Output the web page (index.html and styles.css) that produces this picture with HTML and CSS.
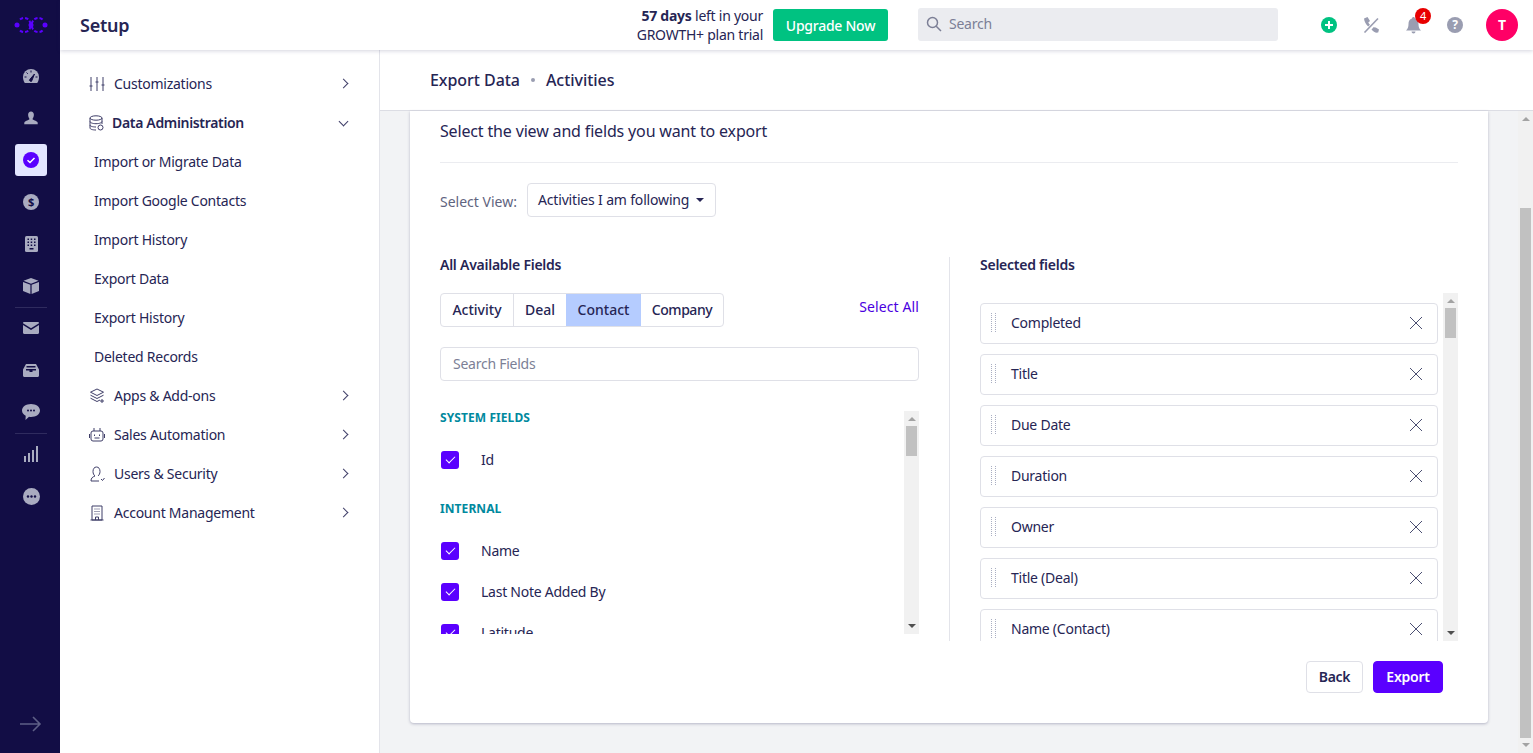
FILE: index.html
```html
<!DOCTYPE html>
<html>
<head>
<meta charset="UTF-8">
<title>Export Data</title>
<link rel="stylesheet" href="styles.css">
</head>
<body>

<nav class="rail">
	<div class="rail-logo">
		<svg width="34" height="18" viewBox="0 0 34 18" fill="none" stroke="#5a00ff" stroke-width="2">
			<path stroke-dasharray="3.500 2" d="M6 3.500C8 1.500 12 1 15 4C16 5 18 13 20 14.500C23 17 27 16.500 29 14"/>
			<path stroke-dasharray="3.500 2" d="M6 14.500C8 16.500 12 17 15 14C16 13 18 5 20 3.500C23 1 27 1.500 29 4"/>
			<circle cx="3" cy="9" r="2.500" fill="#5a00ff" stroke="none"/>
			<circle cx="17" cy="9" r="2.500" fill="#5a00ff" stroke="none"/>
			<circle cx="31" cy="9" r="2.500" fill="#5a00ff" stroke="none"/>
		</svg>
	</div>
	<a class="rail-item"><svg width="16" height="14" viewBox="0 0 16 14"><path d="M8 0a8 8 0 0 0-8 8c0 2.300.7 4.300 1.800 6h12.400C15.300 12.300 16 10.300 16 8a8 8 0 0 0-8-8z" fill="#a9abc0"/><path d="M7 10.200L11.500 5 9 11.200a1.200 1.200 0 1 1-2-1zM8 1.500v2M3.500 3.500l1.300 1.300M1.500 8h2M12.500 8h2" stroke="#120d45" stroke-width="1" fill="#120d45"/></svg></a>
	<a class="rail-item"><svg width="14" height="14" viewBox="0 0 16 15"><path d="M8 0c2 0 3.300 1.600 3.300 3.800S10 8 9.800 8.600c0 1.200 4.700 2 5.600 3.600.3.700.3 1.800.3 2.500H.3c0-.7 0-1.800.3-2.500C1.500 10.600 6.200 9.800 6.200 8.600 6 8 4.700 6 4.700 3.800S6 0 8 0z" fill="#a9abc0"/></svg></a>
	<a class="rail-item rail-active"><svg width="16" height="16" viewBox="0 0 16 16"><circle cx="8" cy="8" r="8" fill="#5a00ff"/><path d="M4.500 8.200l2.500 2.300 4.500-4.500" fill="none" stroke="#fff" stroke-width="1.500"/></svg></a>
	<a class="rail-item"><span class="coin">$</span></a>
	<a class="rail-item"><svg width="13" height="16" viewBox="0 0 13 16"><rect width="13" height="16" rx="1.500" fill="#a9abc0"/><g fill="#120d45"><rect x="2.500" y="2.500" width="1.500" height="1.500"/><rect x="5.700" y="2.500" width="1.500" height="1.500"/><rect x="9" y="2.500" width="1.500" height="1.500"/><rect x="2.500" y="5.500" width="1.500" height="1.500"/><rect x="5.700" y="5.500" width="1.500" height="1.500"/><rect x="9" y="5.500" width="1.500" height="1.500"/><rect x="2.500" y="8.500" width="1.500" height="1.500"/><rect x="5.700" y="8.500" width="1.500" height="1.500"/><rect x="9" y="8.500" width="1.500" height="1.500"/><rect x="4.500" y="12" width="4" height="1.500"/></g></svg></a>
	<a class="rail-item"><svg width="16" height="16" viewBox="0 0 16 16" fill="#a9abc0"><path d="M8 0l7.500 2.800L8 5.700.5 2.800z"/><path d="M0 4l7.400 2.800V16L0 13z"/><path d="M16 4L8.600 6.800V16L16 13z"/></svg></a>
	<div class="rail-sep"></div>
	<a class="rail-item"><svg width="16" height="12" viewBox="0 0 16 12" fill="#a9abc0"><path d="M0 1.200C0 .5.500 0 1.200 0h13.600c.7 0 1.200.5 1.200 1.200L8 6.200z"/><path d="M0 3l8 5 8-5v7.800c0 .7-.5 1.200-1.200 1.200H1.200C.5 12 0 11.500 0 10.800z"/></svg></a>
	<a class="rail-item"><svg width="16" height="13" viewBox="0 0 16 13" fill="#a9abc0"><path fill-rule="evenodd" d="M3 0h10l3 5.500V11.500c0 .8-.6 1.500-1.500 1.500h-13C.6 13 0 12.300 0 11.500V5.500zM3.500 2v1.500h9V2zM3 5v1.500h3.500V8h3V6.500H13V5z"/></svg></a>
	<a class="rail-item"><svg width="18" height="16" viewBox="0 0 18 16"><path d="M9 0c5 0 9 2.800 9 6.500S14 13 9 13c-.7 0-1.300 0-2-.2L3.500 16l.2-4.200C1.500 10.700 0 8.800 0 6.500 0 2.800 4 0 9 0z" fill="#a9abc0"/><g fill="#120d45"><circle cx="6" cy="6.500" r="1"/><circle cx="9" cy="6.500" r="1"/><circle cx="12" cy="6.500" r="1"/></g></svg></a>
	<div class="rail-sep"></div>
	<a class="rail-item"><svg width="15" height="16" viewBox="0 0 15 16" fill="#a9abc0"><rect y="10" width="2" height="6"/><rect x="4" y="7" width="2" height="9"/><rect x="8" y="4" width="2" height="12"/><rect x="12" y="0" width="2" height="16"/></svg></a>
	<a class="rail-item"><svg width="17" height="17" viewBox="0 0 17 17"><circle cx="8.500" cy="8.500" r="8.500" fill="#a9abc0"/><g fill="#120d45"><circle cx="5" cy="8.500" r="1.200"/><circle cx="8.500" cy="8.500" r="1.200"/><circle cx="12" cy="8.500" r="1.200"/></g></svg></a>
	<a class="rail-expand"><svg width="22" height="16" viewBox="0 0 22 16" fill="none" stroke="#5e5f86" stroke-width="1.600"><path d="M0 8h20M13 1l7 7-7 7"/></svg></a>
</nav>

<div class="shell">
	<header class="topbar">
		<div class="app-title">Setup</div>
		<div class="trial"><b>57 days</b> left in your<br>GROWTH+ plan trial</div>
		<a class="upgrade">Upgrade Now</a>
		<div class="search">
			<svg width="16" height="16" viewBox="0 0 16 16" fill="none" stroke="#7c7f96" stroke-width="1.500"><circle cx="6.500" cy="6.500" r="5"/><path d="M10.200 10.200L15 15"/></svg>
			<span>Search</span>
		</div>
		<a class="top-icon"><svg width="16" height="16" viewBox="0 0 16 16"><circle cx="8" cy="8" r="8" fill="#00c281"/><path d="M8 4v8M4 8h8" stroke="#fff" stroke-width="2"/></svg></a>
		<a class="top-icon"><svg width="17" height="16" viewBox="0 0 17 16"><path d="M1 1.500L4.500 0l2.500 4-1.700 1.500c.4.900 1 1.600 1.700 2.200L5.200 9.500C2.800 7.400 1.300 4.600 1 1.500zM8.500 12.500l2.300-2.600c.7.500 1.300.6 2 .6L16 12.500l-.8 3c-2.500.6-4.800-.5-6.700-3z" fill="#9a9db1"/><path d="M1.500 15.500L15 1.500" stroke="#9a9db1" stroke-width="1.600"/></svg></a>
		<a class="top-icon bell">
			<svg width="15" height="17" viewBox="0 0 15 17" fill="#9a9db1"><path d="M7.500 0C8.300 0 9 .6 9 1.500 11.500 2.200 12.500 4.300 12.500 7c0 3 .7 4.700 2.500 6.500H0C1.800 11.700 2.500 10 2.500 7 2.500 4.300 3.500 2.200 6 1.500 6 .6 6.700 0 7.500 0z"/><path d="M5.500 14.500h4a2 2 0 0 1-4 0z"/></svg>
			<span class="badge">4</span>
		</a>
		<a class="top-icon"><span class="help">?</span></a>
		<div class="avatar">T</div>
	</header>

	<div class="workspace">
		<aside class="settings">
			<a class="set-row">
				<svg class="set-icon" width="16" height="16" viewBox="0 0 16 16"><path d="M2 1v14M8 1v14M14 1v14M.5 10h3M6.500 6h3M12.500 9h3"/></svg>
				<span>Customizations</span><i class="chev"></i>
			</a>
			<a class="set-row set-open">
				<svg class="set-icon" width="15" height="16" viewBox="0 0 15 16"><ellipse cx="7" cy="3" rx="6" ry="2.200"/><path d="M1 3v10c0 1.200 2.500 2 6 2M13 3v6M1 6.500c0 1.200 2.700 2.200 6 2.200s6-1 6-2.200M1 10c0 1.200 2.500 2 6 2"/><circle cx="11.500" cy="12.500" r="2.500"/></svg>
				<span>Data Administration</span><i class="chev chev-down"></i>
			</a>
			<a class="set-sub">Import or Migrate Data</a>
			<a class="set-sub">Import Google Contacts</a>
			<a class="set-sub">Import History</a>
			<a class="set-sub">Export Data</a>
			<a class="set-sub">Export History</a>
			<a class="set-sub">Deleted Records</a>
			<a class="set-row">
				<svg class="set-icon" width="16" height="16" viewBox="0 0 16 16"><path d="M8 1l6.500 3.200L8 7.500 1.500 4.200zM1.500 7.200L8 10.500l6.500-3.300M1.500 10.200L8 13.500l3-1.500M13 11v4M11 13h4"/></svg>
				<span>Apps &amp; Add-ons</span><i class="chev"></i>
			</a>
			<a class="set-row">
				<svg class="set-icon" width="16" height="16" viewBox="0 0 16 16"><rect x="2" y="4" width="12" height="10" rx="2"/><path d="M5 1v3M11 1v3M0.500 7v4M15.500 7v4M5.500 11h5M5.500 7.500v1.500M10.500 7.500v1.500"/></svg>
				<span>Sales Automation</span><i class="chev"></i>
			</a>
			<a class="set-row">
				<svg class="set-icon" width="16" height="16" viewBox="0 0 16 16"><path d="M10 15H2c0-3 1.500-4 4-5C4.800 9 4 7.500 4 5.500 4 2.800 5.300 1 7.500 1s3.500 1.800 3.500 4.500c0 2-.8 3.500-2 4.500M12 13l1.500 1.500L15.500 12"/></svg>
				<span>Users &amp; Security</span><i class="chev"></i>
			</a>
			<a class="set-row">
				<svg class="set-icon" width="16" height="16" viewBox="0 0 16 16"><path d="M3 15V1h10v14zM1.500 15h13M6.500 15v-3h3v3M5.500 4h1M7.500 4h1M9.500 4h1M5.500 6.500h1M7.500 6.500h1M9.500 6.500h1M5.500 9h1M7.500 9h1M9.500 9h1"/></svg>
				<span>Account Management</span><i class="chev"></i>
			</a>
		</aside>

		<main class="main">
			<div class="crumbs">
				<span>Export Data</span><i class="crumb-dot"></i><span>Activities</span>
			</div>
			<div class="pane">
				<div class="pane-body">
					<section class="card">
						<h2 class="card-title">Select the view and fields you want to export</h2>
						<div class="view-row">
							<label>Select View:</label>
							<a class="dropdown">Activities I am following<i class="caret"></i></a>
						</div>
						<div class="columns">
							<div class="col-left">
								<h3 class="col-head">All Available Fields</h3>
								<div class="tab-row">
									<div class="tabs">
										<a class="tab tab-line">Activity</a>
										<a class="tab">Deal</a>
										<a class="tab tab-on">Contact</a>
										<a class="tab">Company</a>
									</div>
									<a class="select-all">Select All</a>
								</div>
								<div class="field-search">Search Fields</div>
								<div class="scroll-box field-box">
									<div class="scroll-inner">
										<h4 class="group-head">SYSTEM FIELDS</h4>
										<div class="check-row"><i class="check"></i>Id</div>
										<h4 class="group-head group-next">INTERNAL</h4>
										<div class="check-row"><i class="check"></i>Name</div>
										<div class="check-row"><i class="check"></i>Last Note Added By</div>
										<div class="check-row"><i class="check"></i>Latitude</div>
									</div>
									<div class="fake-scroll"><i class="arrow-up"></i><b class="thumb"></b><i class="arrow-down"></i></div>
								</div>
							</div>
							<div class="col-right">
								<h3 class="col-head">Selected fields</h3>
								<div class="scroll-box picked-box">
									<div class="scroll-inner picked-list">
										<div class="picked"><i class="grip"></i>Completed<svg class="remove" width="12" height="12" viewBox="0 0 12 12"><path d="M0 0l12 12M12 0L0 12"/></svg></div>
										<div class="picked"><i class="grip"></i>Title<svg class="remove" width="12" height="12" viewBox="0 0 12 12"><path d="M0 0l12 12M12 0L0 12"/></svg></div>
										<div class="picked"><i class="grip"></i>Due Date<svg class="remove" width="12" height="12" viewBox="0 0 12 12"><path d="M0 0l12 12M12 0L0 12"/></svg></div>
										<div class="picked"><i class="grip"></i>Duration<svg class="remove" width="12" height="12" viewBox="0 0 12 12"><path d="M0 0l12 12M12 0L0 12"/></svg></div>
										<div class="picked"><i class="grip"></i>Owner<svg class="remove" width="12" height="12" viewBox="0 0 12 12"><path d="M0 0l12 12M12 0L0 12"/></svg></div>
										<div class="picked"><i class="grip"></i>Title (Deal)<svg class="remove" width="12" height="12" viewBox="0 0 12 12"><path d="M0 0l12 12M12 0L0 12"/></svg></div>
										<div class="picked"><i class="grip"></i>Name (Contact)<svg class="remove" width="12" height="12" viewBox="0 0 12 12"><path d="M0 0l12 12M12 0L0 12"/></svg></div>
									</div>
									<div class="fake-scroll"><i class="arrow-up"></i><b class="thumb"></b><i class="arrow-down"></i></div>
								</div>
							</div>
						</div>
						<div class="card-foot">
							<a class="btn btn-back">Back</a>
							<a class="btn btn-primary">Export</a>
						</div>
					</section>
				</div>
				<div class="fake-scroll page-scroll"><i class="arrow-up"></i><b class="thumb"></b><i class="arrow-down"></i></div>
			</div>
		</main>
	</div>
</div>

</body>
</html>
```

FILE: styles.css
```css
* {
	box-sizing: border-box;
}
html, body {
	height: 100%;
}
body {
	margin: 0;
	display: flex;
	overflow: hidden;
	background: #fff;
	color: #262554;
	font-family: "Noto Sans", sans-serif;
	font-size: 14px;
	letter-spacing: -0.25px;
}
h2, h3, h4 {
	margin: 0;
}

/* left rail */
.rail {
	width: 60px;
	flex: none;
	display: flex;
	flex-direction: column;
	align-items: center;
	padding-left: 2px;
	background: #120d45;
}
.rail-logo {
	height: 55px;
	padding-top: 16px;
}
.rail-logo svg {
	display: block;
}
.rail-item {
	width: 32px;
	height: 42px;
	display: flex;
	align-items: center;
	justify-content: center;
	flex: none;
}
.rail-active {
	position: relative;
}
.rail-active::before {
	content: "";
	position: absolute;
	left: 0;
	top: 5px;
	width: 32px;
	height: 32px;
	border-radius: 3px;
	background: #e3e6ff;
}
.rail-active svg {
	position: relative;
}
.rail-sep {
	width: 32px;
	height: 1px;
	margin-bottom: -1px;
	background: #2f2b5e;
	flex: none;
}
.coin {
	width: 16px;
	height: 16px;
	border-radius: 50%;
	background: #a9abc0;
	color: #120d45;
	font-size: 11px;
	font-weight: 700;
	line-height: 16px;
	text-align: center;
}
.rail-expand {
	margin-top: auto;
	margin-bottom: 21px;
	height: 16px;
}
.rail-expand svg {
	display: block;
}

.shell {
	flex: 1;
	min-width: 0;
	display: flex;
	flex-direction: column;
}

/* top bar */
.topbar {
	height: 50px;
	flex: none;
	display: flex;
	align-items: center;
	padding: 0 15px 0 20px;
	box-shadow: 0 1px 4px rgba(40, 40, 90, 0.2);
	position: relative;
	z-index: 2;
	background: #fff;
}
.app-title {
	flex: 1;
	font-size: 18px;
	font-weight: 600;
}
.trial {
	text-align: right;
	line-height: 19px;
}
.trial b {
	font-weight: 700;
}
.upgrade {
	width: 115px;
	height: 32px;
	margin-left: 10px;
	border-radius: 3px;
	background: #00c281;
	color: #fff;
	line-height: 33px;
	text-align: center;
	font-weight: 500;
}
.search {
	width: 360px;
	height: 33px;
	margin: 0 0 2px 30px;
	padding: 0 0 1px 8px;
	display: flex;
	align-items: center;
	gap: 7px;
	border-radius: 3px;
	background: #ebecf0;
	color: #7c7f96;
}
.top-icon {
	width: 42px;
	display: flex;
	justify-content: center;
	align-items: center;
	position: relative;
}
.search + .top-icon {
	margin-left: 30px;
}
.help {
	width: 16px;
	height: 16px;
	border-radius: 50%;
	background: #9a9db1;
	color: #fff;
	font-size: 12px;
	font-weight: 700;
	line-height: 16px;
	text-align: center;
}
.badge {
	position: absolute;
	left: 23px;
	top: -9px;
	width: 16px;
	height: 16px;
	border-radius: 50%;
	background: #e80000;
	color: #fff;
	font-size: 11px;
	line-height: 16px;
	text-align: center;
}
.avatar {
	width: 32px;
	height: 32px;
	margin-left: 10px;
	border-radius: 50%;
	background: #ff0066;
	color: #fff;
	font-weight: 700;
	line-height: 32px;
	text-align: center;
}

.workspace {
	flex: 1;
	min-height: 0;
	display: flex;
}

/* settings menu */
.settings {
	width: 320px;
	flex: none;
	padding-top: 14px;
	border-right: 1px solid #e3e4ea;
}
.set-row, .set-sub {
	height: 39px;
	display: flex;
	align-items: center;
}
.set-row {
	padding: 0 27px 0 29px;
}
.set-sub {
	padding-left: 34px;
}
.set-row span {
	flex: 1;
	margin-left: 9px;
}
.set-open span {
	margin-left: 8px;
	font-weight: 600;
	letter-spacing: -0.33px;
}
.set-icon {
	fill: none;
	stroke: #3f3e68;
	stroke-width: 1;
	flex: none;
}
.chev {
	width: 7px;
	height: 7px;
	margin-right: 5px;
	border-top: 1.500px solid #3f3e68;
	border-right: 1.500px solid #3f3e68;
	transform: rotate(45deg);
}
.chev-down {
	margin: -3px 5px 0 0;
	transform: rotate(135deg);
}

/* main */
.main {
	flex: 1;
	min-width: 0;
	display: flex;
	flex-direction: column;
}
.crumbs {
	height: 61px;
	flex: none;
	display: flex;
	align-items: center;
	padding: 0 0 1px 50px;
	border-bottom: 1px solid #dcdde4;
	font-size: 16px;
	font-weight: 500;
	letter-spacing: -0.05px;
}
.crumb-dot {
	width: 4px;
	height: 4px;
	margin: 0 11px;
	border-radius: 50%;
	background: #9a9db1;
}
.pane {
	flex: 1;
	min-height: 0;
	display: flex;
	background: #f2f3f5;
}
.pane-body {
	flex: 1;
	min-width: 0;
	padding: 0 30px;
}
.card {
	height: 612px;
	padding: 10px 30px 0;
	background: #fff;
	border-radius: 0 0 4px 4px;
	box-shadow: 0 1px 3px rgba(40, 40, 90, 0.3);
}
.card-title {
	height: 42px;
	padding-bottom: 21px;
	border-bottom: 1px solid #ebecf0;
	font-size: 16px;
	font-weight: 400;
	line-height: 20px;
	letter-spacing: -0.16px;
}
.view-row {
	margin-top: 20px;
	display: flex;
	align-items: center;
}
.view-row label {
	width: 87px;
	padding-top: 3px;
	color: #5f6480;
	letter-spacing: 0;
}
.dropdown {
	width: 189px;
	height: 34px;
	display: flex;
	align-items: center;
	padding: 0 0 2px 10px;
	border: 1px solid #dfe0e7;
	border-radius: 4px;
	letter-spacing: -0.17px;
}
.caret {
	margin: 2px 0 0 7px;
	border-top: 4px solid #262554;
	border-left: 4px solid transparent;
	border-right: 4px solid transparent;
}
.columns {
	margin-top: 40px;
	height: 384px;
	display: flex;
}
.col-left {
	width: 510px;
	padding-right: 30px;
	border-right: 1px solid #e3e4ea;
}
.col-right {
	flex: 1;
	margin-left: 30px;
}
.col-head {
	font-size: 14px;
	font-weight: 600;
	line-height: 16px;
	margin-bottom: 20px;
}
.tab-row {
	display: flex;
	justify-content: space-between;
	margin-bottom: 20px;
}
.tabs {
	display: grid;
	grid-template-columns: 73px 52px 75px 1fr;
	width: 284px;
	height: 34px;
	border: 1px solid #dfe0e7;
	border-radius: 4px;
	overflow: hidden;
}
.tab {
	padding-bottom: 2px;
	display: flex;
	align-items: center;
	justify-content: center;
	font-weight: 500;
	letter-spacing: 0;
}
.tab:last-child {
	letter-spacing: -0.45px;
}
.tab-line {
	border-right: 1px solid #dfe0e7;
}
.tab-on {
	background: #b5ccff;
}
.select-all {
	margin-top: 4px;
	line-height: 20px;
	color: #4a00e0;
	letter-spacing: 0.1px;
}
.field-search {
	height: 34px;
	padding-left: 12px;
	margin-bottom: 30px;
	border: 1px solid #dfe0e7;
	border-radius: 4px;
	color: #7c7f96;
	line-height: 32px;
}
.scroll-box {
	display: flex;
	overflow: hidden;
}
.field-box {
	height: 223px;
}
.picked-box {
	height: 348px;
}
.scroll-inner {
	flex: 1;
	min-width: 0;
}
.picked-list {
	padding-top: 10px;
	margin-right: 5px;
}
.group-head {
	font-size: 12px;
	font-weight: 700;
	line-height: 12px;
	padding-top: 1px;
	height: 13px;
	color: #00899e;
	margin-bottom: 16px;
	letter-spacing: 0.08px;
}
.group-next {
	margin-top: 22px;
}
.check-row {
	height: 40px;
	margin-bottom: 1px;
	padding: 0 0 2px 1px;
	display: flex;
	align-items: center;
}
.check {
	width: 18px;
	height: 18px;
	margin: 2px 22px 0 0;
	border-radius: 3px;
	background: #5a00ff;
	position: relative;
}
.check::after {
	content: "";
	position: absolute;
	left: 5px;
	top: 5px;
	width: 8px;
	height: 4px;
	border-left: 1.500px solid #fff;
	border-bottom: 1.500px solid #fff;
	transform: rotate(-45deg);
}
.picked {
	height: 41px;
	margin-bottom: 10px;
	display: flex;
	align-items: center;
	padding: 0 15px 2px 10px;
	border: 1px solid #dfe0e7;
	border-radius: 4px;
}
.grip {
	width: 5px;
	height: 19px;
	margin-right: 15px;
	border-left: 1px dotted #a9aec2;
	border-right: 1px dotted #a9aec2;
}
.remove {
	margin-left: auto;
	fill: none;
	stroke: #4b4f72;
	stroke-width: 1;
}

/* scrollbars */
.fake-scroll {
	width: 15px;
	flex: none;
	position: relative;
	background: #f1f1f1;
}
.arrow-up, .arrow-down {
	position: absolute;
	left: 4px;
	border-left: 4px solid transparent;
	border-right: 4px solid transparent;
}
.arrow-up {
	top: 6px;
	border-bottom: 4px solid #a3a3a3;
}
.arrow-down {
	bottom: 6px;
	border-top: 4px solid #505050;
}
.thumb {
	position: absolute;
	left: 2px;
	width: 11px;
	top: 15px;
	height: 30px;
	background: #c1c1c1;
}
.page-scroll .thumb {
	top: 97px;
	height: 530px;
}
.page-scroll .arrow-down {
	border-top-color: #a3a3a3;
}

/* footer */
.card-foot {
	margin-top: 20px;
	padding-right: 15px;
	display: flex;
	justify-content: flex-end;
	gap: 10px;
}
.btn {
	height: 32px;
	border: 1px solid #dfe0e7;
	border-radius: 4px;
	line-height: 30px;
	text-align: center;
	font-weight: 600;
}
.btn-back {
	width: 57px;
}
.btn-primary {
	width: 70px;
	border-color: #5a00ff;
	background: #5a00ff;
	color: #fff;
}
```
